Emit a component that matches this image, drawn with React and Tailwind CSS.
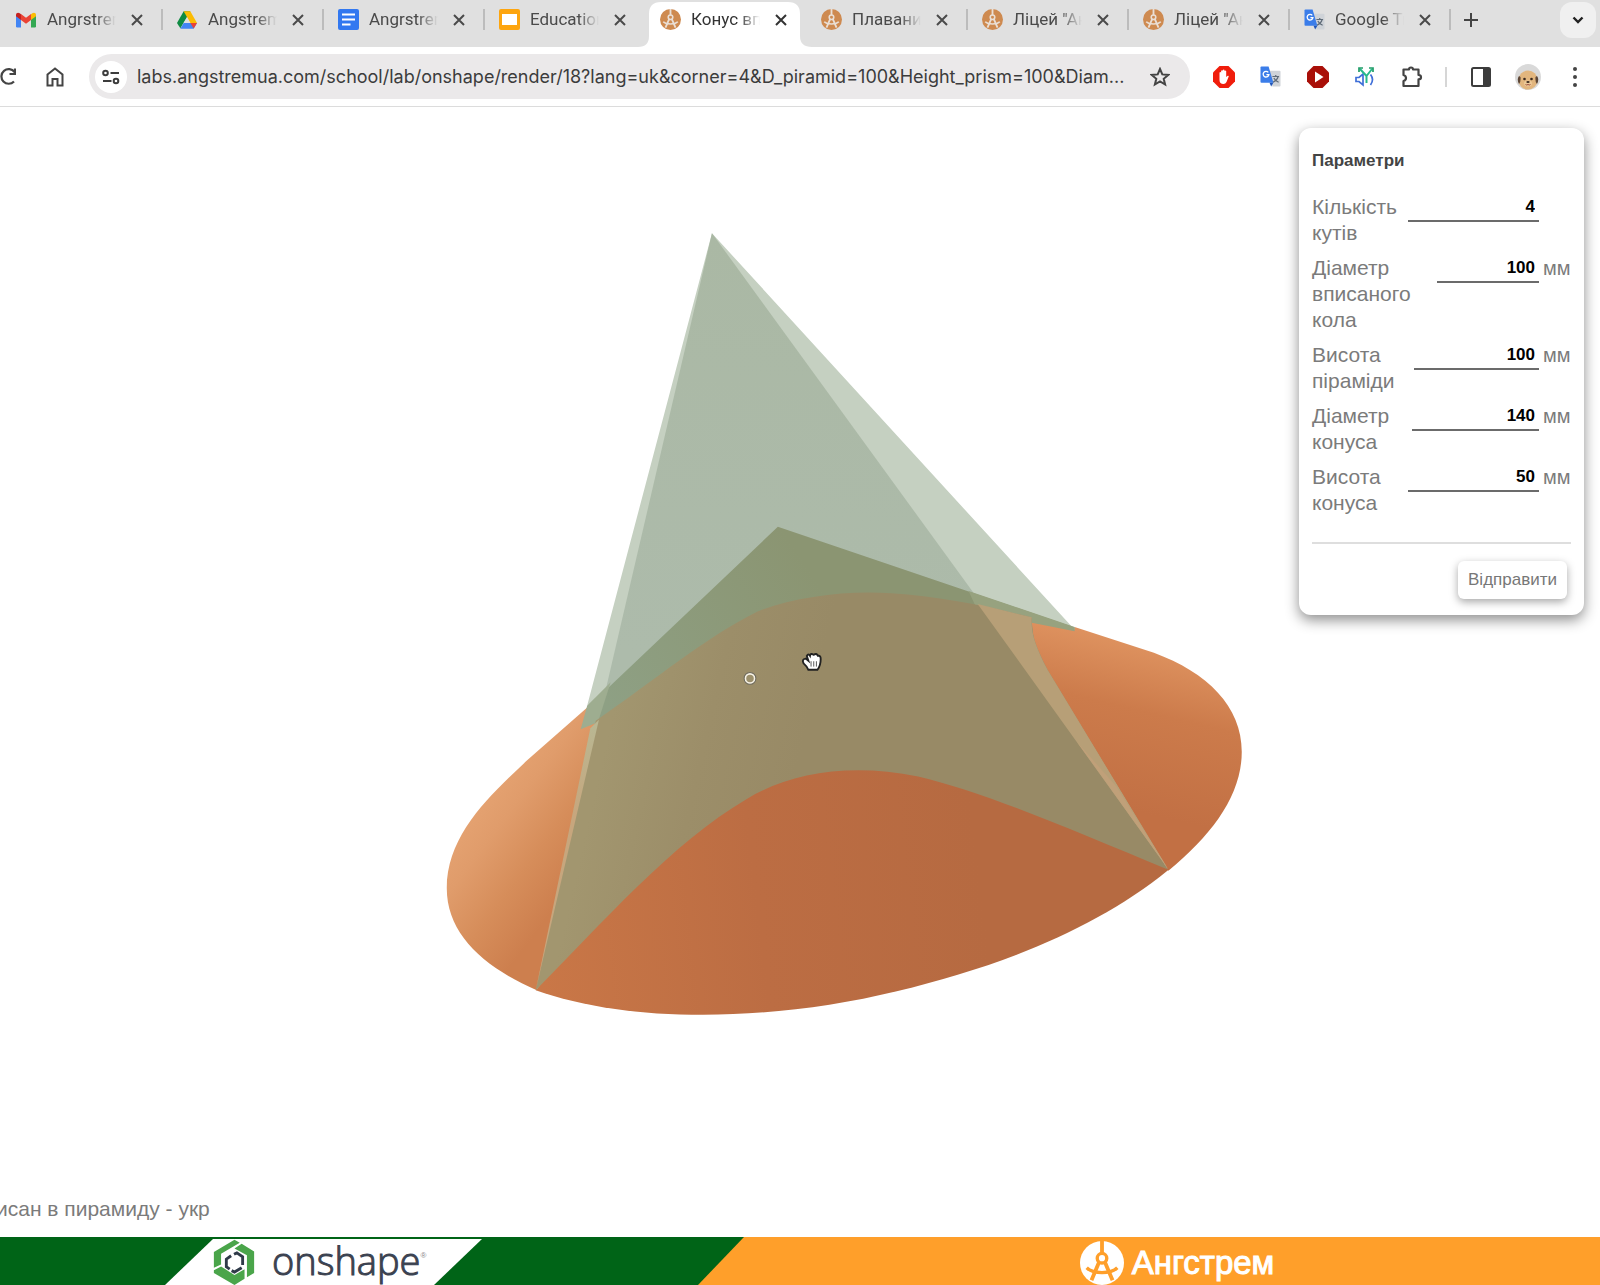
import React from "react";

function GmailIcon() {
  return (
    <svg viewBox="0 0 24 18" className="w-5 h-4 shrink-0" aria-hidden="true">
      <path d="M0 3v13.500q0 1.500 1.500 1.500H6V7z" fill="#4285f4" />
      <path d="M24 3v13.500q0 1.500-1.500 1.500H18V7z" fill="#34a853" />
      <path d="M18 2v7l6-4.500V3c0-2.800-2.600-3.500-4.500-2.200z" fill="#fbbc04" />
      <path d="M6 9V1.800l6 4.500 6-4.500V9l-6 4.500z" fill="#ea4335" />
      <path d="M0 3v1.500L6 9V2L4.500.8C2.600-.5 0 .2 0 3z" fill="#c5221f" />
    </svg>
  );
}

function DriveIcon() {
  return (
    <svg viewBox="0 0 24 21" className="w-5 h-[18px] shrink-0" aria-hidden="true">
      <path d="M8 0h8l-4 7-8 13.500L0 14z" fill="#0f8b43" />
      <path d="M8 0h8l8 14h-8z" fill="#fbbc04" />
      <path d="M8 14h16l-4 7H4z" fill="#4285f4" />
      <path d="M16 14h8l-4 6.800z" fill="#ea4335" />
      <path d="M12 7.200 16 14H8z" fill="#e0e0e0" />
    </svg>
  );
}

function DocsIcon() {
  return (
    <svg viewBox="0 0 21 21" className="w-[21px] h-[21px] shrink-0" aria-hidden="true">
      <rect width="21" height="21" rx="2" fill="#3278f0" />
      <path d="M4 5.500h13M4 10.500h13M4 15.500h8.500" stroke="#fff" strokeWidth="2" />
    </svg>
  );
}

function SlidesIcon() {
  return (
    <svg viewBox="0 0 21 21" className="w-[21px] h-[21px] shrink-0" aria-hidden="true">
      <rect width="21" height="21" rx="2" fill="#fda50f" />
      <rect x="3" y="5" width="15" height="11" fill="#fff" />
    </svg>
  );
}

function CompassMark({ disc, ink, className }) {
  return (
    <svg viewBox="0 0 46 46" className={className} aria-hidden="true">
      <circle cx="23" cy="23" r="23" fill={disc} />
      <g fill="none" stroke={ink} strokeLinecap="butt">
        <path d="M23 0v14" strokeWidth="4" />
        <circle cx="23" cy="18" r="5" strokeWidth="3.500" />
        <path d="M20 22 12 41M26 22l8 19" strokeWidth="4" />
        <path d="M7 28q5 5 16 5t16-5" strokeWidth="3.500" />
      </g>
    </svg>
  );
}

function AngstremIcon() {
  return <CompassMark disc="#ce8a50" ink="#eadfd5" className="w-[21px] h-[21px] shrink-0" />;
}

function TranslateIcon() {
  return (
    <svg viewBox="0 0 22 22" className="w-[21px] h-[21px] shrink-0" aria-hidden="true">
      <path d="M9 5h11.500q1 0 1 1v14.500q0 1-1 1H13z" fill="#cfd3d8" />
      <path d="M13 11h7M16.500 9.500V11M19 11q-1 4-5.500 6M14.500 12.500q1.500 3 5 4.500" stroke="#5f6b78" strokeWidth="1.300" fill="none" />
      <path d="M1.500.5H9l5 17H1.500q-1 0-1-1v-15q0-1 1-1z" fill="#3b7de9" />
      <path d="m10 17.500 4 0-2.300 4z" fill="#1f55b8" />
      <path d="M8.700 6.700A3 3 0 1 0 9.300 9H6.700" stroke="#fff" strokeWidth="1.400" fill="none" />
    </svg>
  );
}

function CloseIcon() {
  return (
    <svg viewBox="0 0 12 12" className="w-3 h-3" aria-hidden="true">
      <path d="m1 1 10 10M11 1 1 11" stroke="currentColor" strokeWidth="2" />
    </svg>
  );
}

const tabs = [
  { title: "Angrstrem", Icon: GmailIcon, line: true },
  { title: "Angstrem", Icon: DriveIcon, line: true },
  { title: "Angrstrem", Icon: DocsIcon, line: true },
  { title: "Education", Icon: SlidesIcon },
  { title: "Конус впи", Icon: AngstremIcon, active: true },
  { title: "Плавание", Icon: AngstremIcon, line: true },
  { title: "Ліцей \"Анг", Icon: AngstremIcon, line: true },
  { title: "Ліцей \"Анг", Icon: AngstremIcon, line: true },
  { title: "Google Tra", Icon: TranslateIcon, line: true },
];

function Tab({ title, Icon, active, line }) {
  return (
    <div
      className={
        "relative flex h-full w-[161px] shrink items-center pb-2 " + (active ? "text-[#333]" : "text-[#4a4a4a]")
      }
    >
      {active && (
        <svg viewBox="0 0 177 45" className="absolute bottom-0 -left-2 h-[45px] w-[177px]" aria-hidden="true">
          <path d="M0 45Q11 45 11 34V12Q11 0 23 0H150Q162 0 162 12V34Q162 45 174 45z" fill="#fff" />
        </svg>
      )}
      <button type="button" className="relative flex min-w-0 items-center pl-[14px] text-left">
        <span className="flex w-[31px] shrink-0">
          <Icon />
        </span>
        <span className="w-[69px] overflow-hidden whitespace-nowrap [mask-image:linear-gradient(to_right,black_70%,transparent)]">
          {title}
        </span>
      </button>
      <button type="button" aria-label="Close tab" className="relative ml-[15px] shrink-0">
        <CloseIcon />
      </button>
      {line && <span className="absolute right-0 h-[21px] w-0.5 bg-[#bcbcbc]" />}
    </div>
  );
}

function TabStrip() {
  return (
    <nav className="flex h-[47px] items-center bg-[#e0e0e0] pl-0.5 font-['Roboto','Noto_Sans',sans-serif] text-[17px]">
      <div className="flex h-full min-w-0">
        {tabs.map((t, i) => (
          <Tab key={i} {...t} />
        ))}
      </div>
      <button type="button" aria-label="New tab" className="ml-[13px] mb-2 text-[#444]">
        <svg viewBox="0 0 14 14" className="w-3.5 h-3.5">
          <path d="M7 0v14M0 7h14" stroke="currentColor" strokeWidth="2" />
        </svg>
      </button>
      <button
        type="button"
        aria-label="Search tabs"
        className="ml-auto mr-1 mb-2 flex h-9 w-9 shrink-0 items-center justify-center rounded-xl bg-[#f0f0f0]"
      >
        <svg viewBox="0 0 12 8" className="w-3 h-2">
          <path d="m1.500 1.500 4.500 4.500 4.500-4.500" fill="none" stroke="#222" strokeWidth="2.400" />
        </svg>
      </button>
    </nav>
  );
}

function ToolButton({ label, children }) {
  return (
    <button type="button" aria-label={label} className="flex w-[47px] shrink-0 justify-center">
      {children}
    </button>
  );
}

function Toolbar() {
  return (
    <div className="flex h-[60px] items-center border-b border-[#dcdcdc] bg-white pr-0.5">
      <button type="button" aria-label="Reload" className="w-4 shrink-0 overflow-hidden">
        <svg viewBox="0 0 16 20" className="w-4 h-5">
          <path d="M14.500 5A7.300 7.300 0 1 0 14 14.500M15 1.500V7H9.500" fill="none" stroke="#444" strokeWidth="2.200" />
        </svg>
      </button>
      <button type="button" aria-label="Home" className="ml-[30px] shrink-0">
        <svg viewBox="0 0 18 20" className="w-[18px] h-5">
          <path d="M1.500 7.500 9 1.500l7.500 6V18.500H11.500V12h-5v6.500h-5z" fill="none" stroke="#444" strokeWidth="2" />
        </svg>
      </button>
      <div className="ml-[25px] flex h-[45px] min-w-0 flex-1 items-center rounded-full bg-[#ebe9ea] pl-1.5 pr-5">
        <button
          type="button"
          aria-label="Site information"
          className="flex h-8 w-8 shrink-0 items-center justify-center rounded-full bg-white"
        >
          <svg viewBox="0 0 18 16" className="w-[18px] h-4" fill="none" stroke="#3c3c3c" strokeWidth="2">
            <circle cx="3.500" cy="4" r="2.300" />
            <path d="M8.500 4H17M1 12h8.500" />
            <circle cx="14" cy="12" r="2.300" />
          </svg>
        </button>
        <input
          aria-label="Address"
          readOnly
          value="labs.angstremua.com/school/lab/onshape/render/18?lang=uk&corner=4&D_piramid=100&Height_prism=100&Diam..."
          className="ml-2.5 min-w-0 flex-1 bg-transparent font-['Inter',sans-serif] text-[18px] text-[#3c3c3c] outline-none"
        />
        <button type="button" aria-label="Bookmark" className="shrink-0">
          <svg viewBox="0 0 20 20" className="w-5 h-5">
            <path d="m10 2 2.300 5.400 5.900.5-4.500 3.900 1.400 5.700-5.100-3.100-5.100 3.100 1.400-5.700L1.800 7.900l5.900-.5z" fill="none" stroke="#444" strokeWidth="2" />
          </svg>
        </button>
      </div>
      <div className="ml-2.5 flex shrink-0 items-center">
        <ToolButton label="Ad blocker">
          <svg viewBox="0 0 22 22" className="w-[22px] h-[22px]">
            <path d="M6.500 0h9L22 6.500v9L15.500 22h-9L0 15.500v-9z" fill="#f01d0c" />
            <path d="M6.500 11V6.500q1-1 1.600 0V9 4.700q1-1 1.700 0V9 4q1-1 1.700 0v5-4q1-1 1.700 0v6l1.500-1.300q1.300-.3 1 .8L13.500 16q-1 2-3 2-4 0-4-4z" fill="#fff" />
          </svg>
        </ToolButton>
        <ToolButton label="Translate">
          <TranslateIcon />
        </ToolButton>
        <ToolButton label="Video blocker">
          <svg viewBox="0 0 22 22" className="w-[22px] h-[22px]">
            <path d="M6.500 0h9L22 6.500v9L15.500 22h-9L0 15.500v-9z" fill="#a90f08" />
            <path d="m8 5.500 8.500 5.500L8 16.500z" fill="#fff" />
          </svg>
        </ToolButton>
        <ToolButton label="Volume">
          <svg viewBox="0 0 20 22" className="w-5 h-[22px]" fill="none" strokeWidth="1.700">
            <path d="M1 11.500h3l4-3.500v11l-4-3.500H1z" stroke="#3f6fd8" />
            <path d="M15.500 8.500q4 5 0 10.500" stroke="#3f6fd8" />
            <path d="M11.500 17V10L5 3M11.500 10 17 3" stroke="#28b98b" strokeWidth="2" />
            <path d="M4 6V2h4M14 2h4v4" stroke="#1f9d68" />
          </svg>
        </ToolButton>
        <ToolButton label="Extensions">
          <svg viewBox="0 0 22 22" className="w-[22px] h-[22px]">
            <path d="M2.500 3.500H8q0-2 2-2t2 2h5.500V9q2.500 0 2.500 2.200t-2.500 2.200V20h-15v-5q2.500-.8 2.500-3T2.500 9z" fill="none" stroke="#444" strokeWidth="2.200" strokeLinejoin="round" />
          </svg>
        </ToolButton>
        <span className="mx-2.5 h-5 w-0.5 bg-[#d6d6d6]" />
        <ToolButton label="Side panel">
          <svg viewBox="0 0 20 20" className="w-5 h-5">
            <rect x="1" y="1" width="18" height="18" rx="1.500" fill="none" stroke="#3c3c3c" strokeWidth="2" />
            <path d="M12 1h7v18h-7z" fill="#3c3c3c" />
          </svg>
        </ToolButton>
        <ToolButton label="Profile">
          <svg viewBox="0 0 26 26" className="w-[26px] h-[26px]">
            <circle cx="13" cy="13" r="13" fill="#d9d9d9" />
            <circle cx="13" cy="16" r="9.500" fill="#e2b67e" />
            <path d="M4 12Q1.500 15 4 20q2-2 1.500-7zM22 12q2.500 3 0 8-2-2-1.500-7z" fill="#5d4636" />
            <circle cx="9.500" cy="15" r="1.300" fill="#3b2a1e" />
            <circle cx="16.500" cy="15" r="1.300" fill="#3b2a1e" />
            <ellipse cx="13" cy="19.500" rx="4" ry="3" fill="#ecc998" />
            <ellipse cx="13" cy="18" rx="1.700" ry="1.100" fill="#3b2a1e" />
            <path d="M10.500 20.500q1.200 1 2.500 0 1.300 1 2.500 0" stroke="#9d4d3c" fill="none" />
          </svg>
        </ToolButton>
        <ToolButton label="Menu">
          <svg viewBox="0 0 4 20" className="w-1 h-5" fill="#444">
            <circle cx="2" cy="2" r="2" />
            <circle cx="2" cy="10" r="2" />
            <circle cx="2" cy="18" r="2" />
          </svg>
        </ToolButton>
      </div>
    </div>
  );
}

function Model() {
  return (
    <svg viewBox="0 0 1600 1076" className="block h-auto w-full" role="img" aria-label="Cone inscribed in a pyramid">
      <defs>
        <linearGradient id="leftCone" gradientUnits="userSpaceOnUse" x1="90" y1="1120" x2="290" y2="1270">
          <stop offset="0" stopColor="#e6a473" />
          <stop offset="0.300" stopColor="#e09c6b" />
          <stop offset="0.650" stopColor="#d68d5a" />
          <stop offset="1" stopColor="#cd7f4e" />
        </linearGradient>
        <linearGradient id="rightCone" gradientUnits="userSpaceOnUse" x1="1400" y1="840" x2="1330" y2="1140">
          <stop offset="0" stopColor="#de925f" />
          <stop offset="0.400" stopColor="#cc7b4b" />
          <stop offset="1" stopColor="#c27044" />
        </linearGradient>
        <linearGradient id="base" gradientUnits="userSpaceOnUse" x1="220" y1="1400" x2="1050" y2="1300">
          <stop offset="0" stopColor="#c97747" />
          <stop offset="0.500" stopColor="#bc6d43" />
          <stop offset="1" stopColor="#b66a41" />
        </linearGradient>
        <linearGradient id="band" gradientUnits="userSpaceOnUse" x1="350" y1="1000" x2="700" y2="1080">
          <stop offset="0" stopColor="#a2966f" />
          <stop offset="0.500" stopColor="#9c8e69" />
          <stop offset="1" stopColor="#988a66" />
        </linearGradient>
        <linearGradient id="tip" gradientUnits="userSpaceOnUse" x1="340" y1="930" x2="720" y2="680">
          <stop offset="0" stopColor="#8ea084" />
          <stop offset="1" stopColor="#8b9572" />
        </linearGradient>
        <linearGradient id="front" gradientUnits="userSpaceOnUse" x1="545" y1="62" x2="500" y2="850">
          <stop offset="0" stopColor="#aab8a4" />
          <stop offset="1" stopColor="#adbbab" />
        </linearGradient>
        <linearGradient id="strip" gradientUnits="userSpaceOnUse" x1="324" y1="980" x2="290" y2="1150">
          <stop offset="0" stopColor="#b9b792" />
          <stop offset="1" stopColor="#c7a67d" />
        </linearGradient>
      </defs>
      <g transform="translate(420 93) scale(.5357)">
        <path d="M545 62 312 944 660 760 1220 800z" fill="#c5d0c1" />
        <path d="M545 62 336 960 1060 770z" fill="url(#front)" />
        <path d="M318 942 668 610 1222 798V810L1142 860 600 900 300 988z" fill="url(#tip)" />
        <path d="M318 942 200 1046C130 1112 50 1185 50 1285 50 1370 118 1432 218 1475L330 960z" fill="url(#leftCone)" />
        <path d="M312 944 356 900 332 975 300 988z" fill="#9ead90" />
        <path d="M1142 788 1222 802 1222 797 1370 845C1470 882 1534 945 1534 1030 1534 1110 1480 1184 1397 1252L1148 840z" fill="url(#rightCone)" />
        <path d="m1024 730 198 67v8l-80-16-100-20z" fill="#97a27f" />
        <path d="M216 1475C390 1537 650 1535 890 1477 1080 1431 1260 1363 1398 1250L1160 1060H560z" fill="url(#base)" />
        <path d="M328 972C440 895 530 818 630 768 700 740 800 728 880 734 970 740 1060 757 1142 780 1140 810 1150 835 1172 878L1396 1250C1210 1172 1050 1104 930 1076 800 1050 690 1070 610 1118 470 1200 340 1350 216 1475z" fill="url(#band)" />
        <path d="M1041 754 1142 779C1140 810 1150 835 1172 878L1397 1250z" fill="#b79f77" />
        <path d="m1300 1095 97 155-170-238z" fill="#c0a079" />
        <path d="M318 986 334 970 216 1475z" fill="url(#strip)" />
        <g fill="#f7f2e6" stroke="#6e6b5e" strokeWidth="2">
          <circle cx="616" cy="893" r="11" />
          <circle cx="616" cy="893" r="7" fill="#9c906c" stroke="none" />
        </g>
        <path d="M716 865q-4-8 4-9l5 4-3-9q3-5 6 0 1-6 7-2 5-4 8 2 5-1 5 6 0 12-6 20h-17q-3-7-9-12z" fill="#fff" stroke="#222" strokeWidth="3.500" />
        <path d="M730 861v10M735 861v10M740 861v10" stroke="#333" strokeWidth="1.500" />
      </g>
    </svg>
  );
}

const fields = [
  { id: "corner", label: "Кількість кутів", value: "4", unit: "", width: "w-[131px]" },
  { id: "inner", label: "Діаметр вписаного кола", value: "100", unit: "мм", width: "w-[102px]" },
  { id: "height", label: "Висота піраміди", value: "100", unit: "мм", width: "w-[125px]" },
  { id: "cone-d", label: "Діаметр конуса", value: "140", unit: "мм", width: "w-[127px]" },
  { id: "cone-h", label: "Висота конуса", value: "50", unit: "мм", width: "w-[131px]" },
];

function ParameterPanel() {
  return (
    <form
      onSubmit={(e) => e.preventDefault()}
      className="absolute right-4 top-[21px] w-[285px] rounded-xl bg-white px-[13px] pb-4 pt-[21px] shadow-[0_5px_14px_rgba(0,0,0,0.45)]"
    >
      <h2 className="text-[17px] font-bold leading-6 text-[#444]">Параметри</h2>
      <div className="mt-[21px] flex flex-col gap-[9px]">
        {fields.map((f) => (
          <div key={f.id} className="flex items-start">
            <label htmlFor={f.id} className="min-w-0 flex-1 text-[21px] leading-[26px] text-[#7b7b7b]">
              {f.label}
            </label>
            <input
              id={f.id}
              defaultValue={f.value}
              className={
                "h-7 shrink-0 border-b-2 border-[#6b6b6b] bg-transparent pr-1 text-right text-[17px] font-bold text-black outline-none " +
                f.width
              }
            />
            <span className="w-8 shrink-0 pl-1 text-[20px] leading-[26px] text-[#7b7b7b]">{f.unit}</span>
          </div>
        ))}
      </div>
      <hr className="mt-[26px] border-t-2 border-[#dedede]" />
      <div className="mt-[17px] flex justify-end pr-1">
        <button
          type="submit"
          className="h-[38px] w-[109px] rounded-md bg-white text-[17px] text-[#777] shadow-[0_3px_8px_rgba(0,0,0,0.35)]"
        >
          Відправити
        </button>
      </div>
    </form>
  );
}

function OnshapeMark() {
  return (
    <svg viewBox="0 0 42 48" className="h-[46px] w-[42px]" aria-hidden="true">
      <g fill="#4aa54a">
        <path d="M0 30V13.500L21.500.7 27 4 7.500 15.500v11z" />
        <path d="m29 5 13 8v22.500l-7.500 4.500V17l-13-7z" />
        <path d="m0 32.500 7.500-3.700 14 8.700 10.500-6v10L21.500 48 0 35.500z" />
      </g>
      <g fill="none" stroke="#2f3a48" strokeWidth="3">
        <path d="M18 17.500 13 21v8l3.500 2.500" />
        <path d="m21 16 3-1.500 6 4V27" />
        <path d="m18.500 33 3 1.500 7.500-4.500" />
      </g>
    </svg>
  );
}

function Footer() {
  return (
    <footer className="flex h-12 bg-[#ff9f2a]">
      <div className="h-full w-[46.5%] bg-[#006417] pt-0.5 [clip-path:polygon(0_0,100%_0,calc(100%-46px)_100%,0_100%)]">
        <div className="ml-[165px] flex h-full w-[317px] items-center bg-white pl-12 [clip-path:polygon(48px_0,100%_0,calc(100%-48px)_100%,0_100%)]">
          <OnshapeMark />
          <span className="-mt-1 ml-[17px] font-['Open_Sans',sans-serif] text-[38px] font-light leading-10 text-[#3b4250] [-webkit-text-stroke:1px_#3b4250]">onshape</span>
          <span className="mb-3 text-[8px] text-[#888]">®</span>
        </div>
      </div>
      <div className="flex flex-1 items-center justify-center pl-2.5 pt-1">
        <div className="flex items-center gap-2">
          <CompassMark disc="#fff" ink="#ff9f2a" className="h-11 w-11" />
          <span className="text-[33px] leading-9 text-white [-webkit-text-stroke:1px_white]">Ангстрем</span>
        </div>
      </div>
    </footer>
  );
}

export default function App() {
  return (
    <div className="flex min-h-screen flex-col bg-white font-['Liberation_Sans',Arial,sans-serif]">
      <TabStrip />
      <Toolbar />
      <main className="relative flex flex-1 flex-col justify-between overflow-hidden">
        <Model />
        <ParameterPanel />
        <p className="-ml-1 flex h-[54px] items-center pb-0.5 text-[21px] text-[#7b7b7b]">исан в пирамиду - укр</p>
      </main>
      <Footer />
    </div>
  );
}
